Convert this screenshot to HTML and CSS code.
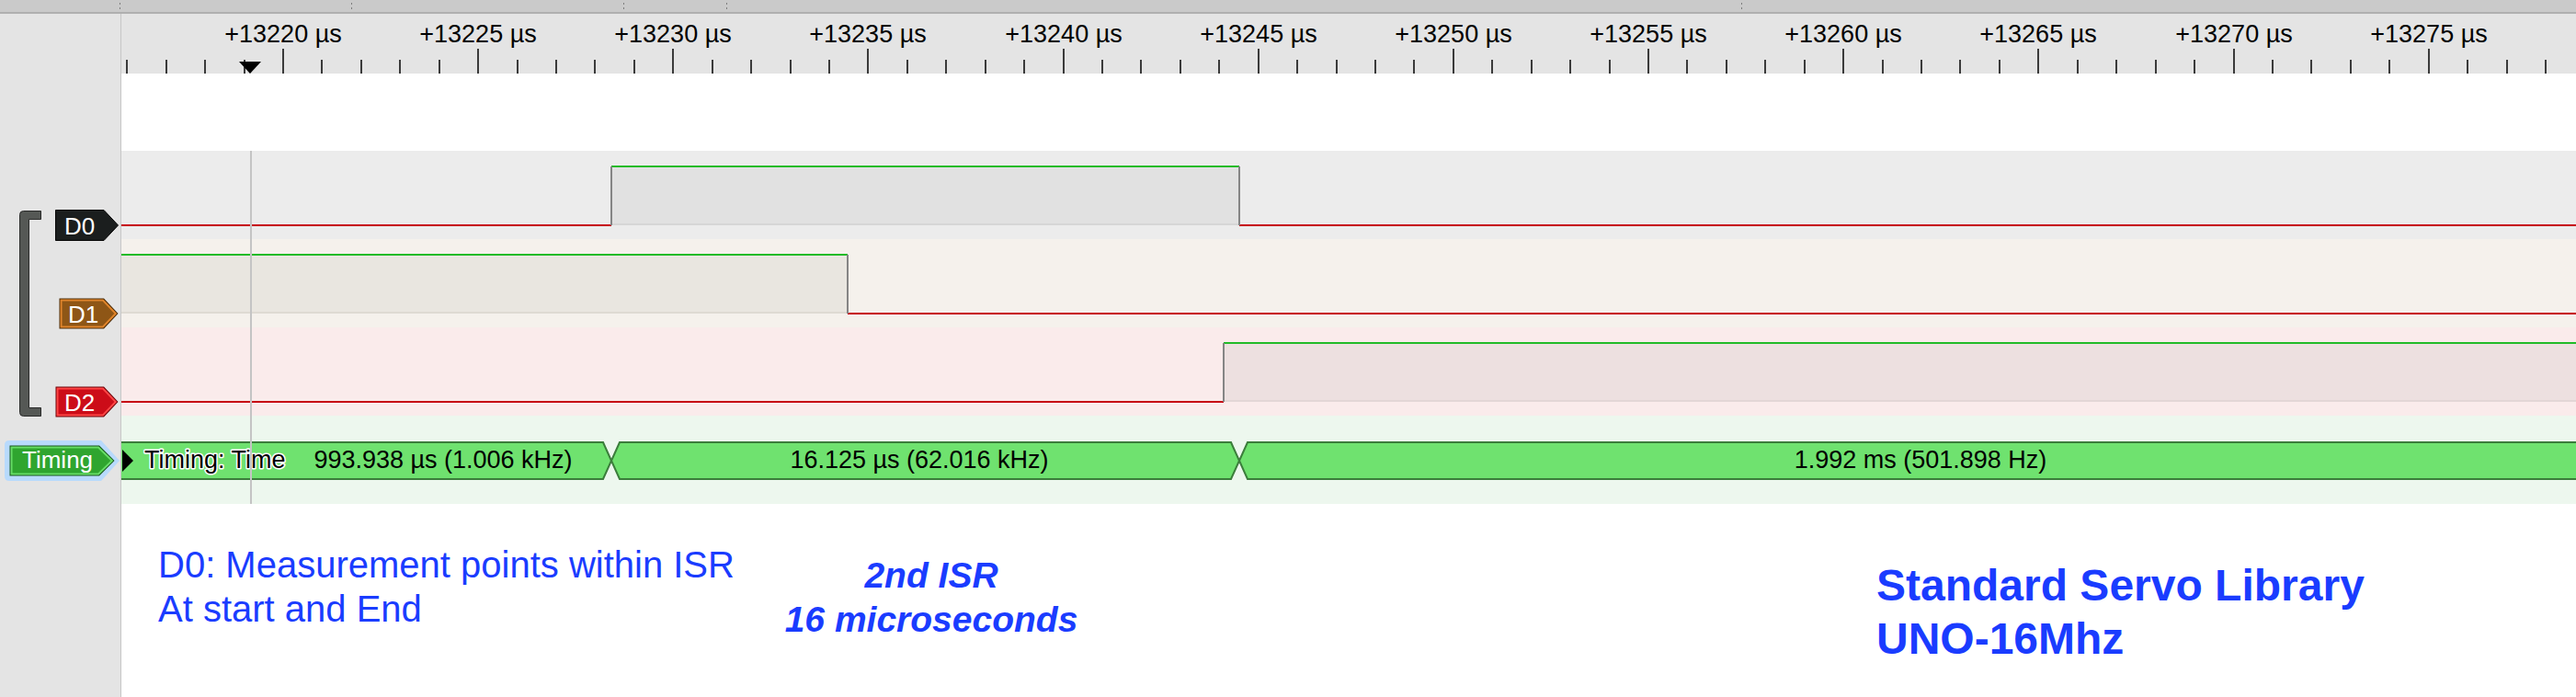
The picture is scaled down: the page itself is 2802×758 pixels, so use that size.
FILE: index.html
```html
<!DOCTYPE html>
<html lang="en">
<head>
<meta charset="utf-8">
<title>Logic analyzer – Servo ISR timing</title>
<link rel="stylesheet" href="styles.css">
</head>
<body>
<div class="app">
  <div class="topbar">
    <div class="tb-col tb-1"></div>
    <div class="tb-col tb-2"></div>
    <div class="tb-col tb-3"></div>
    <div class="tb-col tb-4"></div>
    <div class="tb-col tb-5"></div>
    <div class="tb-col tb-6"></div>
  </div>

  <div class="sidebar"></div>

  <div class="ruler">
    <svg width="2670" height="65" viewBox="0 0 2670 65">
      <path class="tick" d="M6 50V65M49 50V65M91 50V65M134 50V65M218 50V65M261 50V65M303 50V65M346 50V65M431 50V65M473 50V65M515 50V65M558 50V65M643 50V65M685 50V65M728 50V65M770 50V65M855 50V65M897 50V65M940 50V65M982 50V65M1067 50V65M1109 50V65M1152 50V65M1194 50V65M1279 50V65M1322 50V65M1364 50V65M1406 50V65M1491 50V65M1534 50V65M1576 50V65M1619 50V65M1703 50V65M1746 50V65M1788 50V65M1831 50V65M1916 50V65M1958 50V65M2000 50V65M2043 50V65M2128 50V65M2170 50V65M2213 50V65M2255 50V65M2340 50V65M2382 50V65M2425 50V65M2467 50V65M2552 50V65M2595 50V65M2637 50V65"/>
      <path class="tick" d="M176 38V65M388 38V65M600 38V65M812 38V65M1025 38V65M1237 38V65M1449 38V65M1661 38V65M1873 38V65M2085 38V65M2298 38V65M2510 38V65"/>
      <g class="tick-label">
        <text x="176" y="31">+13220 µs</text>
        <text x="388" y="31">+13225 µs</text>
        <text x="600" y="31">+13230 µs</text>
        <text x="812" y="31">+13235 µs</text>
        <text x="1025" y="31">+13240 µs</text>
        <text x="1237" y="31">+13245 µs</text>
        <text x="1449" y="31">+13250 µs</text>
        <text x="1661" y="31">+13255 µs</text>
        <text x="1873" y="31">+13260 µs</text>
        <text x="2085" y="31">+13265 µs</text>
        <text x="2298" y="31">+13270 µs</text>
        <text x="2510" y="31">+13275 µs</text>
      </g>
      <polygon points="128,52 152,52 140,65" fill="#000"/>
    </svg>
  </div>

  <div class="blank"></div>

  <div class="ch ch-d0">
    <svg width="2670" height="96" viewBox="0 0 2670 96">
      <rect x="533" y="18" width="683" height="63" fill="#e1e1e1"/>
      <path d="M533 80H1216" stroke="#d6d6d6" stroke-width="2"/>
      <path d="M0 81H533M1216 81H2670" class="lo"/>
      <path d="M533 17H1216" class="hi"/>
      <path d="M533 17V81M1216 17V81" class="edge"/>
    </svg>
  </div>

  <div class="ch ch-d1">
    <svg width="2670" height="96" viewBox="0 0 2670 96">
      <rect x="0" y="18" width="790" height="63" fill="#e9e6e0"/>
      <path d="M0 80H790" stroke="#dedad3" stroke-width="2"/>
      <path d="M0 17H790" class="hi"/>
      <path d="M790 81H2670" class="lo"/>
      <path d="M790 17V81" class="edge"/>
    </svg>
  </div>

  <div class="ch ch-d2">
    <svg width="2670" height="96" viewBox="0 0 2670 96">
      <rect x="1199" y="18" width="1471" height="63" fill="#ede0e0"/>
      <path d="M1199 80H2670" stroke="#e3d6d6" stroke-width="2"/>
      <path d="M0 81H1199" class="lo"/>
      <path d="M1199 17H2670" class="hi"/>
      <path d="M1199 17V81" class="edge"/>
    </svg>
  </div>

  <div class="ch ch-timing">
    <svg width="2670" height="96" viewBox="0 0 2670 96">
      <polygon class="seg" points="-4,29 524,29 533,49 524,69 -4,69"/>
      <polygon class="seg" points="542,29 1207,29 1216,49 1207,69 542,69 533,49"/>
      <polygon class="seg" points="1225,29 2680,29 2680,69 1225,69 1216,49"/>
      <polygon points="1,37 13,49 1,61" fill="#000"/>
      <text class="bar-name" x="25" y="57">Timing: Time</text>
      <text class="bar-text" x="350" y="57">993.938 µs (1.006 kHz)</text>
      <text class="bar-text" x="868" y="57">16.125 µs (62.016 kHz)</text>
      <text class="bar-text" x="1957" y="57">1.992 ms (501.898 Hz)</text>
    </svg>
  </div>

  <div class="notes">
    <p class="note note-1">D0: Measurement points within ISR<br>At start and End</p>
    <p class="note note-2">2nd ISR<br>16 microseconds</p>
    <p class="note note-3">Standard Servo Library<br>UNO-16Mhz</p>
  </div>

  <div class="bracket">
    <svg width="24" height="224" viewBox="0 0 24 224">
      <path d="M23.5 0.5H4.5Q0.5 0.5 0.5 4.5V219.5Q0.5 223.5 4.5 223.5H23.5V214.5H10.5V9.5H23.5Z" fill="#555855" stroke="#2a2b2a"/>
    </svg>
  </div>

  <div class="badge badge-d0">
    <svg width="69" height="34" viewBox="0 0 69 34">
      <polygon points="0.5,0.5 53,0.5 68.5,17 53,33.5 0.5,33.5" fill="#1b1e1e" stroke="#050505"/>
      <text class="badge-text" x="10" y="27">D0</text>
    </svg>
  </div>

  <div class="badge badge-d1">
    <svg width="65" height="34" viewBox="0 0 65 34">
      <polygon points="0.5,0.5 49,0.5 64.5,17 49,33.5 0.5,33.5" fill="#4a2a05"/>
      <polygon points="2.5,2.5 48,2.5 61.8,17 48,31.5 2.5,31.5" fill="#8e5616" stroke="#e0842a" stroke-width="2"/>
      <text class="badge-text" x="10" y="27">D1</text>
    </svg>
  </div>

  <div class="badge badge-d2">
    <svg width="69" height="34" viewBox="0 0 69 34">
      <polygon points="0.5,0.5 53,0.5 68.5,17 53,33.5 0.5,33.5" fill="#6d0006"/>
      <polygon points="2.5,2.5 52,2.5 65.8,17 52,31.5 2.5,31.5" fill="#cc0c18" stroke="#ff4545" stroke-width="2"/>
      <text class="badge-text" x="10" y="27">D2</text>
    </svg>
  </div>

  <div class="badge badge-timing">
    <svg width="125" height="44" viewBox="0 0 125 44">
      <path d="M5 0H105L125 22L105 44H5Q0 44 0 39V5Q0 0 5 0Z" fill="#b8dafc"/>
      <polygon points="5.5,5.5 103,5.5 119.5,22 103,38.5 5.5,38.5" fill="#17561a"/>
      <polygon points="7.5,7.5 102,7.5 116.8,22 102,36.5 7.5,36.5" fill="#2fa52f" stroke="#66dd66" stroke-width="2"/>
      <text class="badge-text" x="19" y="30">Timing</text>
    </svg>
  </div>

  <div class="cursor"></div>
</div>
</body>
</html>
```

FILE: styles.css
```css
* {
  box-sizing: border-box;
}

html,
body {
  margin: 0;
  padding: 0;
}

body {
  width: 2802px;
  height: 758px;
  overflow: hidden;
  background: #ffffff;
  font-family: "Liberation Sans", Arial, sans-serif;
}

.app {
  display: grid;
  grid-template-columns: 132px 2670px;
  grid-template-rows: 15px 65px 84px 96px 96px 96px 96px 210px;
}

/* top toolbar strip */
.topbar {
  grid-column: 1 / -1;
  grid-row: 1;
  display: flex;
  background: #cacaca;
  border-bottom: 2px solid #afafaf;
}

.tb-col {
  position: relative;
  height: 13px;
  flex: none;
}

.tb-col::after {
  content: "";
  position: absolute;
  right: 0;
  top: 3px;
  width: 1px;
  height: 8px;
  background: linear-gradient(#7d7d7d 0 2px, transparent 2px 5px, #7d7d7d 5px 7px, transparent 7px);
}

.tb-1 { width: 131px; }
.tb-2 { width: 252px; }
.tb-3 { width: 296px; }
.tb-4 { width: 112px; }
.tb-5 { width: 1104px; }
.tb-6 { flex: 1; }
.tb-6::after { display: none; }

/* left label column */
.sidebar {
  grid-column: 1;
  grid-row: 2 / -1;
  background: #e4e4e4;
  border-right: 1px solid #c6c6c6;
}

/* time ruler */
.ruler {
  grid-column: 2;
  grid-row: 2;
  background: #e4e4e4;
}

.ruler svg,
.ch svg,
.badge svg,
.bracket svg {
  display: block;
}

.tick {
  stroke: #111;
  stroke-width: 1.6;
  fill: none;
}

.tick-label {
  font-family: "Liberation Sans", Arial, sans-serif;
  font-size: 27px;
  fill: #000;
  text-anchor: middle;
}

.blank {
  grid-column: 2;
  grid-row: 3;
  background: #ffffff;
}

/* channels */
.ch {
  grid-column: 2;
}

.ch-d0 { grid-row: 4; background: #ececec; }
.ch-d1 { grid-row: 5; background: #f5f1ec; }
.ch-d2 { grid-row: 6; background: #faebeb; }
.ch-timing { grid-row: 7; background: #edf7ee; }

.lo {
  stroke: #c6000f;
  stroke-width: 2;
  fill: none;
}

.hi {
  stroke: #22bb28;
  stroke-width: 2;
  fill: none;
}

.edge {
  stroke: #858585;
  stroke-width: 2;
  fill: none;
}

.seg {
  fill: #6fe26f;
  stroke: #3b7d3b;
  stroke-width: 2;
}

.bar-text {
  font-family: "Liberation Sans", Arial, sans-serif;
  font-size: 27px;
  fill: #000;
  text-anchor: middle;
}

.bar-name {
  font-family: "Liberation Sans", Arial, sans-serif;
  font-size: 27px;
  fill: #000;
  stroke: #ffffff;
  stroke-width: 3;
  paint-order: stroke;
  stroke-linejoin: round;
}

/* annotations */
.notes {
  grid-column: 2;
  grid-row: 8;
  display: flex;
  align-items: flex-start;
  color: #1a3cff;
}

.note {
  margin: 0;
  flex: none;
}

.note-1 {
  margin: 42px 0 0 40px;
  width: 641px;
  font-size: 40px;
  line-height: 48px;
}

.note-2 {
  margin-top: 54px;
  width: 400px;
  text-align: center;
  font-size: 39px;
  line-height: 48px;
  font-weight: bold;
  font-style: italic;
}

.note-3 {
  margin: 60px 0 0 828px;
  font-size: 48px;
  line-height: 58px;
  font-weight: bold;
}

/* channel group bracket and labels */
.bracket {
  grid-column: 1;
  grid-row: 4 / 7;
  align-self: start;
  justify-self: start;
  margin: 65px 0 0 21px;
  width: 24px;
  height: 224px;
}

.badge {
  grid-column: 1;
  align-self: start;
  justify-self: start;
}

.badge-text {
  font-family: "Liberation Sans", Arial, sans-serif;
  font-size: 26px;
  fill: #ffffff;
}

.badge-d0 { grid-row: 4; margin: 64px 0 0 60px; }
.badge-d1 { grid-row: 5; margin: 64px 0 0 64px; }
.badge-d2 { grid-row: 6; margin: 64px 0 0 60px; }
.badge-timing { grid-row: 7; margin: 27px 0 0 5px; }

/* measurement cursor */
.cursor {
  grid-column: 2;
  grid-row: 4 / 8;
  justify-self: start;
  width: 2px;
  margin-left: 140px;
  background: #c4c4c4;
}
```
